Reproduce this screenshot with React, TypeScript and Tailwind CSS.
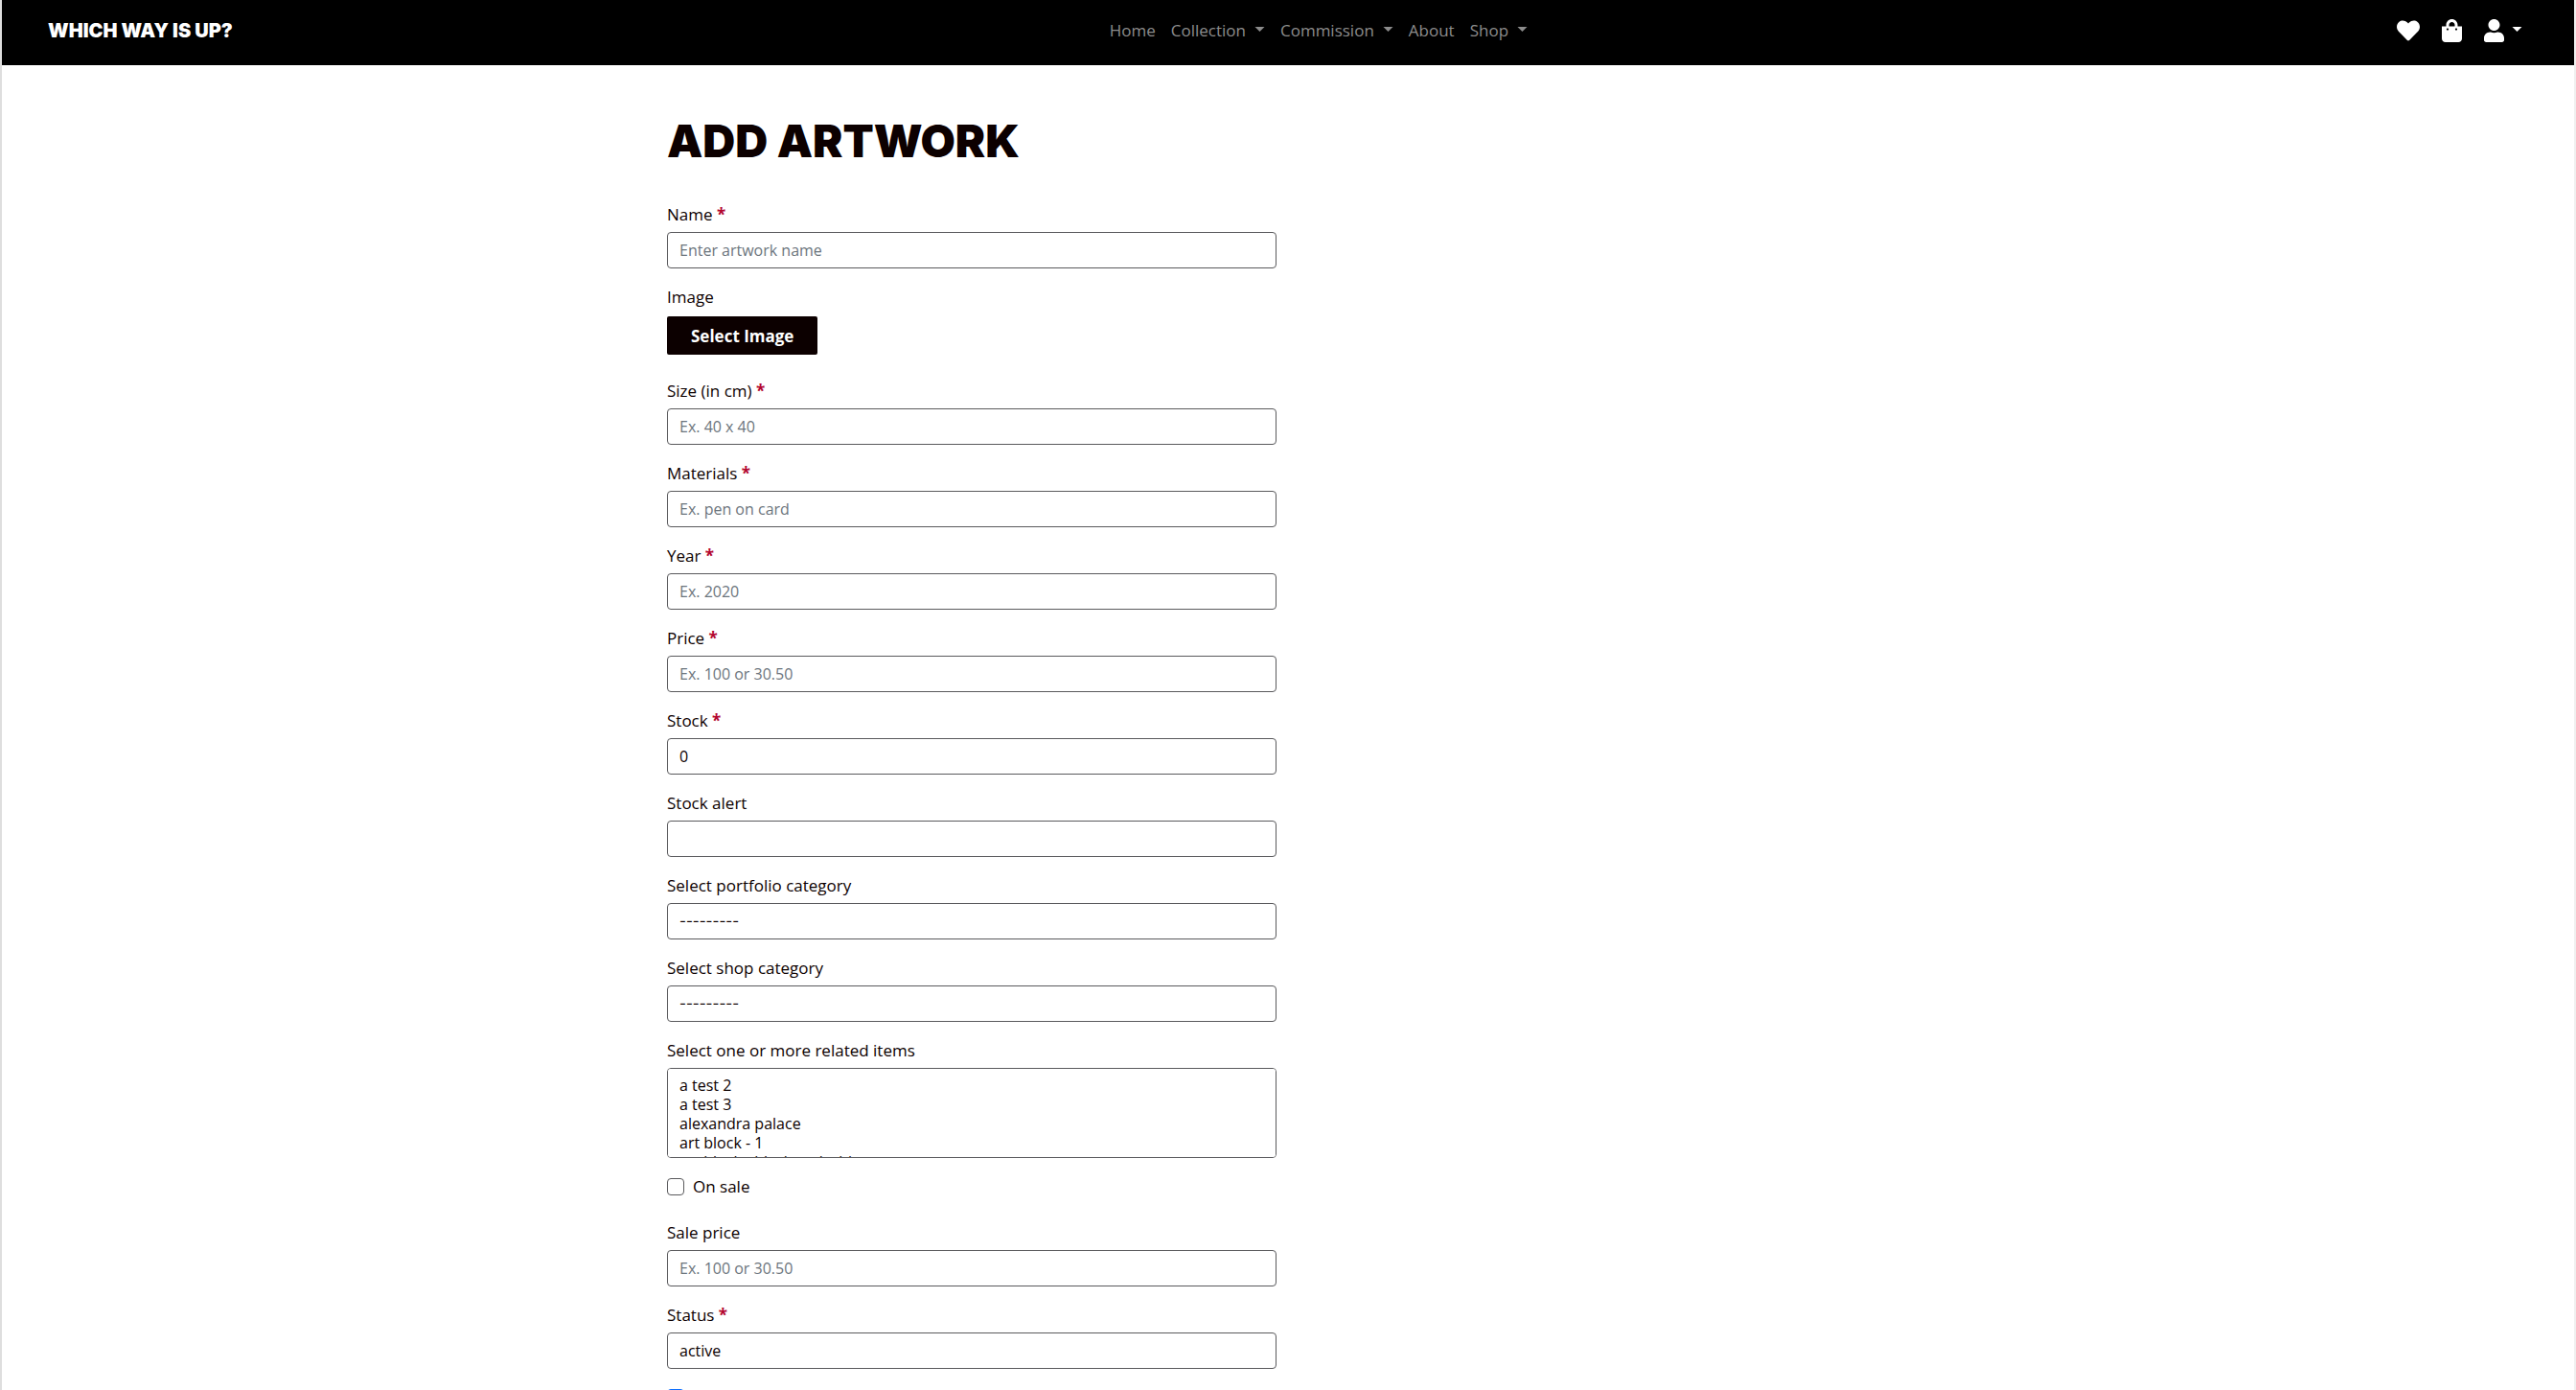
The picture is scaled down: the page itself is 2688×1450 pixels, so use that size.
import type { ReactNode } from "react";
import { FaHeart, FaShoppingBag, FaUser } from "react-icons/fa";

const control =
  "block h-[38px] w-full appearance-none rounded border border-[#5a5a5d] bg-white px-3 text-base placeholder:text-[#6c757d] placeholder:opacity-100";

function Caret() {
  return (
    <svg aria-hidden="true" viewBox="0 0 12 6" className="mb-1 h-[5px] w-[11px] shrink-0" fill="currentColor">
      <path d="M0 0h12L6 6z" />
    </svg>
  );
}

function Field({ id, label, required, children }: { id: string; label: string; required?: boolean; children: ReactNode }) {
  return (
    <div className="mb-4">
      <label htmlFor={id} className="mb-1 block leading-7 font-medium">
        {label}
        {required && <span className="font-bold text-[#b3062f]"> *</span>}
      </label>
      {children}
    </div>
  );
}

type TextFieldProps = { id: string; label: string; required?: boolean; placeholder?: string; value?: string };

function TextField({ id, label, required, placeholder, value }: TextFieldProps) {
  return (
    <Field id={id} label={label} required={required}>
      <input id={id} type="text" placeholder={placeholder} defaultValue={value} className={control} />
    </Field>
  );
}

function CategoryField({ id, label }: { id: string; label: string }) {
  return (
    <Field id={id} label={label}>
      <select
        id={id}
        className="block h-[38px] w-full appearance-none rounded border border-[#5a5a5d] bg-white px-3 font-[Inter,sans-serif] text-[15px]"
      >
        <option>---------</option>
      </select>
    </Field>
  );
}

const checkbox =
  "size-[18px] shrink-0 appearance-none rounded border border-[#5a5a5d] bg-white checked:border-[#0d6efd] checked:bg-[#0d6efd]";

const navLinks = [
  { label: "Home", menu: false },
  { label: "Collection", menu: true },
  { label: "Commission", menu: true },
  { label: "About", menu: false },
  { label: "Shop", menu: true },
];

const relatedItems = ["a test 2", "a test 3", "alexandra palace", "art block - 1", "art block - black and white"];

export default function App() {
  return (
    <div className="h-screen overflow-y-auto border-r-2 border-l-2 border-r-[#f0f0f0] border-l-[#dedede] bg-white font-['Open_Sans',sans-serif] text-[17px] text-[#0c0000] [scrollbar-width:none]">
      <header className="flex h-[68px] items-center justify-between bg-black px-12 pb-1">
        <a href="#" className="mr-4 font-[Inter,sans-serif] text-xl leading-7 font-black text-white">
          WHICH WAY IS UP?
        </a>
        <nav className="flex items-center font-medium text-[#8c8c8c]">
          {navLinks.map(({ label, menu }) =>
            menu ? (
              <button key={label} type="button" className="flex items-center gap-[9px] px-2 leading-7">
                {label}
                <Caret />
              </button>
            ) : (
              <a key={label} href="#" className="px-2 leading-7">
                {label}
              </a>
            ),
          )}
        </nav>
        <div className="flex items-center gap-[23px] pl-2 text-white">
          <a href="#" aria-label="Wishlist">
            <FaHeart className="size-6" />
          </a>
          <a href="#" aria-label="Shopping bag">
            <FaShoppingBag className="h-6 w-[21px]" />
          </a>
          <button type="button" aria-label="Account" className="mr-1.5 flex items-center gap-2">
            <FaUser className="h-6 w-[21px]" />
            <Caret />
          </button>
        </div>
      </header>

      <main className="mx-auto max-w-[1320px] px-3 pt-12">
        <form className="w-[calc(50%-12px)]">
          <h1 className="mb-8 font-[Inter,sans-serif] text-[47px] leading-[62px] font-black whitespace-nowrap">ADD ARTWORK</h1>

          <TextField id="name" label="Name" required placeholder="Enter artwork name" />

          <div className="mb-6">
            <p id="image-label" className="mb-1.5 leading-7 font-medium">
              Image
            </p>
            <button
              type="button"
              aria-describedby="image-label"
              className="block h-10 rounded-xs bg-[#0c0000] px-[25px] pt-0.5 font-bold text-white"
            >
              Select Image
            </button>
          </div>

          <TextField id="size" label="Size (in cm)" required placeholder="Ex. 40 x 40" />
          <TextField id="materials" label="Materials" required placeholder="Ex. pen on card" />
          <TextField id="year" label="Year" required placeholder="Ex. 2020" />
          <TextField id="price" label="Price" required placeholder="Ex. 100 or 30.50" />
          <TextField id="stock" label="Stock" required value="0" />
          <TextField id="stock-alert" label="Stock alert" />
          <CategoryField id="portfolio-category" label="Select portfolio category" />
          <CategoryField id="shop-category" label="Select shop category" />

          <Field id="related" label="Select one or more related items">
            <select
              id="related"
              multiple
              className="block h-[94px] w-full appearance-none overflow-y-auto rounded border border-[#5a5a5d] bg-white px-3 py-1.5 text-base [scrollbar-width:none]"
            >
              {relatedItems.map((item) => (
                <option key={item} className="h-5 p-0 leading-5">
                  {item}
                </option>
              ))}
            </select>
          </Field>

          <div className="mb-5 flex items-center gap-[9px]">
            <input id="on-sale" type="checkbox" className={checkbox} />
            <label htmlFor="on-sale" className="leading-7 font-medium">
              On sale
            </label>
          </div>

          <TextField id="sale-price" label="Sale price" placeholder="Ex. 100 or 30.50" />

          <Field id="status" label="Status" required>
            <select id="status" className={control}>
              <option>active</option>
            </select>
          </Field>

          <div className="flex h-7 items-center">
            <input type="checkbox" aria-label="Visible" defaultChecked className={checkbox} />
          </div>
        </form>
      </main>
    </div>
  );
}
